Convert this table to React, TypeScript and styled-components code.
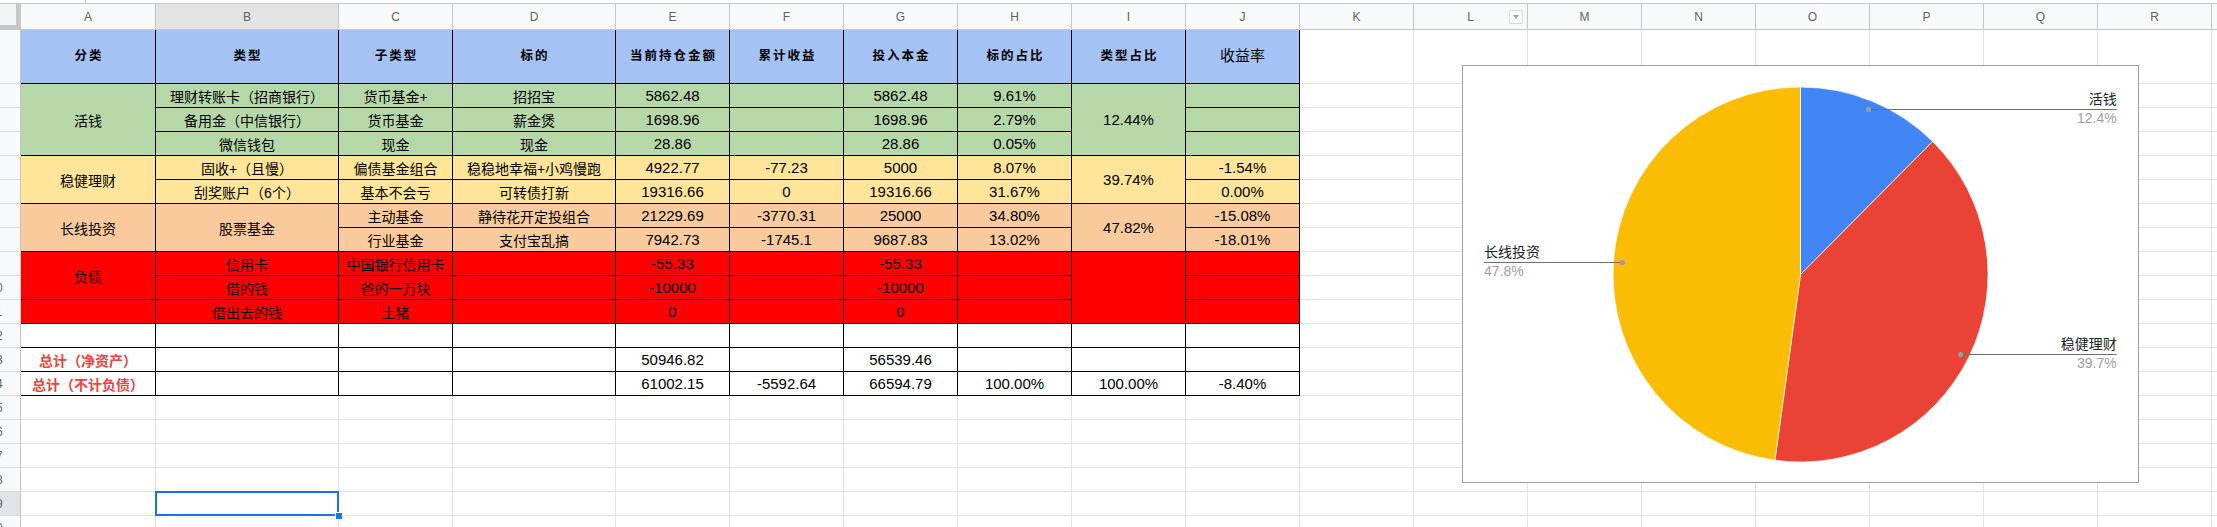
import React from "react";
import styled, { createGlobalStyle } from "styled-components";

const GlobalStyle = createGlobalStyle`
  html, body { margin: 0; padding: 0; background: #ffffff; overflow: hidden; }
  body { font-family: "Liberation Sans", "Noto Sans CJK SC", sans-serif; }
  #root { width: 2217px; height: 527px; overflow: hidden; }
`;

const BLUE = "#a4c2f4";
const GREEN = "#b6d7a8";
const YELLOW = "#ffe599";
const ORANGE = "#f9cb9c";
const RED = "#ff0000";
const WHITE = "#ffffff";
const TABLE_LINE = "#000000";
const GRID_LINE = "#e2e2e2";

/* the last column is only a sliver at the window edge, so its letter is not shown */
const LETTERS = "ABCDEFGHIJKLMNOPQR".split("").concat([""]);
const ROW_COUNT = 20;

type Kind = "head" | "headPlain" | "text" | "num" | "total";
interface CellDef {
  r: number;
  c: number;
  rs: number;
  t: string;
  k: Kind;
  bg: string;
}

const isNum = (t: string) => /^-?[\d.]+%?$/.test(t);

const TABLE: CellDef[] = [];
const add = (r: number, bg: string, items: Array<[number, string, Kind?, number?]>) =>
  items.forEach(([c, t, k, rs]) =>
    TABLE.push({ r, c, t, rs: rs ?? 1, bg, k: k ?? (isNum(t) ? "num" : "text") })
  );

add(1, BLUE, [
  [1, "分类", "head"],
  [2, "类型", "head"],
  [3, "子类型", "head"],
  [4, "标的", "head"],
  [5, "当前持仓金额", "head"],
  [6, "累计收益", "head"],
  [7, "投入本金", "head"],
  [8, "标的占比", "head"],
  [9, "类型占比", "head"],
  [10, "收益率", "headPlain"],
]);
add(2, GREEN, [
  [1, "活钱", "text", 3],
  [2, "理财转账卡（招商银行）"],
  [3, "货币基金+"],
  [4, "招招宝"],
  [5, "5862.48"],
  [6, ""],
  [7, "5862.48"],
  [8, "9.61%"],
  [9, "12.44%", "num", 3],
  [10, ""],
]);
add(3, GREEN, [
  [2, "备用金（中信银行）"],
  [3, "货币基金"],
  [4, "薪金煲"],
  [5, "1698.96"],
  [6, ""],
  [7, "1698.96"],
  [8, "2.79%"],
  [10, ""],
]);
add(4, GREEN, [
  [2, "微信钱包"],
  [3, "现金"],
  [4, "现金"],
  [5, "28.86"],
  [6, ""],
  [7, "28.86"],
  [8, "0.05%"],
  [10, ""],
]);
add(5, YELLOW, [
  [1, "稳健理财", "text", 2],
  [2, "固收+（且慢）"],
  [3, "偏债基金组合"],
  [4, "稳稳地幸福+小鸡慢跑"],
  [5, "4922.77"],
  [6, "-77.23"],
  [7, "5000"],
  [8, "8.07%"],
  [9, "39.74%", "num", 2],
  [10, "-1.54%"],
]);
add(6, YELLOW, [
  [2, "刮奖账户（6个）"],
  [3, "基本不会亏"],
  [4, "可转债打新"],
  [5, "19316.66"],
  [6, "0"],
  [7, "19316.66"],
  [8, "31.67%"],
  [10, "0.00%"],
]);
add(7, ORANGE, [
  [1, "长线投资", "text", 2],
  [2, "股票基金", "text", 2],
  [3, "主动基金"],
  [4, "静待花开定投组合"],
  [5, "21229.69"],
  [6, "-3770.31"],
  [7, "25000"],
  [8, "34.80%"],
  [9, "47.82%", "num", 2],
  [10, "-15.08%"],
]);
add(8, ORANGE, [
  [3, "行业基金"],
  [4, "支付宝乱搞"],
  [5, "7942.73"],
  [6, "-1745.1"],
  [7, "9687.83"],
  [8, "13.02%"],
  [10, "-18.01%"],
]);
add(9, RED, [
  [1, "负债", "text", 2],
  [2, "信用卡"],
  [3, "中国银行信用卡"],
  [4, ""],
  [5, "-55.33"],
  [6, ""],
  [7, "-55.33"],
  [8, ""],
  [9, "", "text", 3],
  [10, ""],
]);
add(10, RED, [
  [2, "借的钱"],
  [3, "爸的一万块"],
  [4, ""],
  [5, "-10000"],
  [6, ""],
  [7, "-10000"],
  [8, ""],
  [10, ""],
]);
add(11, RED, [
  [1, ""],
  [2, "借出去的钱"],
  [3, "土猪"],
  [4, ""],
  [5, "0"],
  [6, ""],
  [7, "0"],
  [8, ""],
  [10, ""],
]);
add(12, WHITE, [1, 2, 3, 4, 5, 6, 7, 8, 9, 10].map((c) => [c, ""] as [number, string]));
add(13, WHITE, [
  [1, "总计（净资产）", "total"],
  [2, ""],
  [3, ""],
  [4, ""],
  [5, "50946.82"],
  [6, ""],
  [7, "56539.46"],
  [8, ""],
  [9, ""],
  [10, ""],
]);
add(14, WHITE, [
  [1, "总计（不计负债）", "total"],
  [2, ""],
  [3, ""],
  [4, ""],
  [5, "61002.15"],
  [6, "-5592.64"],
  [7, "66594.79"],
  [8, "100.00%"],
  [9, "100.00%"],
  [10, "-8.40%"],
]);

const SELECTED = { r: 19, c: 2 };

const EMPTY: Array<{ r: number; c: number }> = [];
for (let r = 1; r <= ROW_COUNT; r++) {
  for (let c = 1; c <= LETTERS.length; c++) {
    const inTable = r <= 14 && c <= 10;
    const sel = r === SELECTED.r && c === SELECTED.c;
    if (!inTable && !sel) EMPTY.push({ r, c });
  }
}

/* ---------- layout ---------- */

const Page = styled.div`
  width: 2217px;
  height: 527px;
  overflow: hidden;
  display: flex;
  flex-direction: column;
  background: #ffffff;
`;

const TopStrip = styled.div`
  flex: 0 0 4px;
  box-sizing: border-box;
  border-bottom: 1px solid #c4c7c5;
  display: flex;
`;

const Tick = styled.div`
  width: 1px;
  height: 3px;
  margin-left: 85px;
  background: #c4c7c5;
`;

const Sheet = styled.div`
  position: relative;
  display: grid;
  grid-template-columns: 21px 135px 183px 114px 163px repeat(15, 114px);
  grid-template-rows: 26px 54px repeat(19, 24px);
  font-family: "Liberation Sans", "Noto Sans CJK SC", sans-serif;
`;

const Corner = styled.div`
  grid-row: 1;
  grid-column: 1;
  box-sizing: border-box;
  background: #f1f3f4;
  border-right: 5px solid #c4c7c5;
  border-bottom: 5px solid #c4c7c5;
`;

const ColHead = styled.div<{ $c: number; $active?: boolean }>`
  grid-row: 1;
  grid-column: ${(p) => p.$c + 1};
  box-sizing: border-box;
  background: ${(p) => (p.$active ? "#e1e3e6" : "#f8f9fa")};
  border-right: 1px solid #c4c7c5;
  border-bottom: 1px solid #c4c7c5;
  display: grid;
  grid-template-columns: 1fr auto 1fr;
  align-items: center;
  font-family: "Liberation Sans", Roboto, sans-serif;
  font-size: 12px;
  color: #5f6368;
`;

const ColLetter = styled.span`
  grid-column: 2;
`;

const FilterBtn = styled.span`
  grid-column: 3;
  justify-self: end;
  margin-right: 4px;
  width: 14px;
  height: 14px;
  box-sizing: border-box;
  border: 1px solid #dadce0;
  border-radius: 2px;
  background: #f8f9fa;
  display: flex;
  align-items: center;
  justify-content: center;
  &::after {
    content: "";
    border-left: 3.5px solid transparent;
    border-right: 3.5px solid transparent;
    border-top: 4px solid #9aa0a6;
  }
`;

const RowHead = styled.div<{ $r: number; $rs: number; $active?: boolean }>`
  grid-row: ${(p) => p.$r + 1} / span ${(p) => p.$rs};
  grid-column: 1;
  box-sizing: border-box;
  background: ${(p) => (p.$active ? "#e1e3e6" : "#f8f9fa")};
  border-right: 1px solid #c4c7c5;
  border-bottom: 1px solid #dadce0;
  overflow: hidden;
  display: flex;
  align-items: center;
  font-family: "Liberation Sans", Roboto, sans-serif;
  font-size: 12px;
  color: #5f6368;
`;

const RowNum = styled.span`
  flex: 0 0 50px;
  margin-left: -29px;
  text-align: center;
`;

const Cell = styled.div<{ $r: number; $c: number; $rs: number; $bg: string; $line: string }>`
  grid-row: ${(p) => p.$r + 1} / span ${(p) => p.$rs};
  grid-column: ${(p) => p.$c + 1};
  box-sizing: border-box;
  min-width: 0;
  background: ${(p) => p.$bg};
  border-right: 1px solid ${(p) => p.$line};
  border-bottom: 1px solid ${(p) => p.$line};
  display: flex;
  align-items: center;
  justify-content: center;
  overflow: hidden;
  white-space: nowrap;
  color: #000000;
`;

const SelectedCell = styled(Cell)`
  position: relative;
  overflow: visible;
  z-index: 2;
  &::before {
    content: "";
    position: absolute;
    left: -1px;
    top: -1px;
    right: -1px;
    bottom: -1px;
    border: 2px solid #1a73e8;
  }
  &::after {
    content: "";
    position: absolute;
    right: -5px;
    bottom: -5px;
    width: 6px;
    height: 6px;
    background: #1a73e8;
    border: 1px solid #ffffff;
  }
`;

const HeadText = styled.span<{ $plain?: boolean }>`
  font-size: ${(p) => (p.$plain ? "15px" : "12.5px")};
  font-weight: ${(p) => (p.$plain ? 400 : 700)};
  letter-spacing: ${(p) => (p.$plain ? "0" : "2px")};
  margin-right: ${(p) => (p.$plain ? "0" : "-2px")};
  margin-bottom: 4px;
`;

const NumText = styled.span`
  font-size: 15px;
`;

const LabelText = styled.span`
  font-size: 14px;
`;

const TotalText = styled.span`
  font-size: 14px;
  font-weight: 700;
  color: #e8453c;
`;

/* ---------- chart ---------- */

const ChartBox = styled.div`
  position: absolute;
  left: 1462px;
  top: 61px;
  width: 677px;
  height: 418px;
  box-sizing: border-box;
  border: 1px solid #9e9e9e;
  background: #ffffff;
`;

const ChartSvg = styled.svg`
  display: block;
  font-family: "Liberation Sans", "Noto Sans CJK SC", sans-serif;
`;

const SliceName = styled.text`
  font-size: 14px;
  fill: #222222;
`;

const SlicePct = styled.text`
  font-size: 14px;
  fill: #9e9e9e;
`;

const PIE = [
  { name: "活钱", value: 5862.48 + 1698.96 + 28.86, color: "#4285f4" },
  { name: "稳健理财", value: 4922.77 + 19316.66, color: "#ea4335" },
  { name: "长线投资", value: 21229.69 + 7942.73, color: "#fbbc04" },
];

function PieChart() {
  const W = 675;
  const H = 416;
  const cx = 337.5;
  const cy = 208.5;
  const r = 187.5;
  const rd = 178.6;
  const total = PIE.reduce((s, d) => s + d.value, 0);
  const pt = (a: number, rad: number) => [cx + rad * Math.sin(a), cy - rad * Math.cos(a)];
  let acc = 0;
  const slices = PIE.map((d) => {
    const a0 = (acc / total) * Math.PI * 2;
    acc += d.value;
    const a1 = (acc / total) * Math.PI * 2;
    const [x0, y0] = pt(a0, r);
    const [x1, y1] = pt(a1, r);
    const large = a1 - a0 > Math.PI ? 1 : 0;
    const path = `M ${cx} ${cy} L ${x0} ${y0} A ${r} ${r} 0 ${large} 1 ${x1} ${y1} Z`;
    const mid = (a0 + a1) / 2;
    const [dx, dy] = pt(mid, rd);
    const pct = ((d.value / total) * 100).toFixed(1) + "%";
    return { ...d, path, dx, dy: Math.round(dy) + 0.5, right: mid < Math.PI, pct };
  });
  return (
    <ChartSvg width={W} height={H} viewBox={`0 0 ${W} ${H}`}>
      {slices.map((s) => (
        <path key={s.name} d={s.path} fill={s.color} stroke="#ffffff" strokeWidth={0.7} />
      ))}
      {slices.map((s) => {
        const lx = s.right ? 653.7 : 21;
        return (
          <g key={s.name + "-label"}>
            <line x1={s.dx} y1={s.dy} x2={lx} y2={s.dy} stroke="#6f6f6f" strokeWidth={1} />
            <circle cx={s.dx} cy={s.dy} r={2.5} fill="#9aa0a6" />
            <SliceName x={lx} y={s.dy - 6} textAnchor={s.right ? "end" : "start"}>
              {s.name}
            </SliceName>
            <SlicePct x={lx} y={s.dy + 13} textAnchor={s.right ? "end" : "start"}>
              {s.pct}
            </SlicePct>
          </g>
        );
      })}
    </ChartSvg>
  );
}

function CellContent({ d }: { d: CellDef }) {
  if (!d.t) return null;
  switch (d.k) {
    case "head":
      return <HeadText>{d.t}</HeadText>;
    case "headPlain":
      return <HeadText $plain>{d.t}</HeadText>;
    case "num":
      return <NumText>{d.t}</NumText>;
    case "total":
      return <TotalText>{d.t}</TotalText>;
    default:
      return <LabelText>{d.t}</LabelText>;
  }
}

export default function App() {
  return (
    <Page>
      <GlobalStyle />
      <TopStrip>
        <Tick />
      </TopStrip>
      <Sheet>
        <Corner />
        {LETTERS.map((l, i) => (
          <ColHead key={`col${i}`} $c={i + 1} $active={i + 1 === SELECTED.c}>
            <ColLetter>{l}</ColLetter>
            {l === "L" && <FilterBtn />}
          </ColHead>
        ))}
        {Array.from({ length: ROW_COUNT }, (_, i) => i + 1).map((r) => (
          <RowHead key={r} $r={r} $rs={1} $active={r === SELECTED.r}>
            <RowNum>{r}</RowNum>
          </RowHead>
        ))}
        {TABLE.map((d) => (
          <Cell key={`t${d.r}-${d.c}`} $r={d.r} $c={d.c} $rs={d.rs} $bg={d.bg} $line={TABLE_LINE}>
            <CellContent d={d} />
          </Cell>
        ))}
        {EMPTY.map((e) => (
          <Cell key={`e${e.r}-${e.c}`} $r={e.r} $c={e.c} $rs={1} $bg={WHITE} $line={GRID_LINE} />
        ))}
        <SelectedCell $r={SELECTED.r} $c={SELECTED.c} $rs={1} $bg={WHITE} $line={GRID_LINE} />
        <ChartBox>
          <PieChart />
        </ChartBox>
      </Sheet>
    </Page>
  );
}
